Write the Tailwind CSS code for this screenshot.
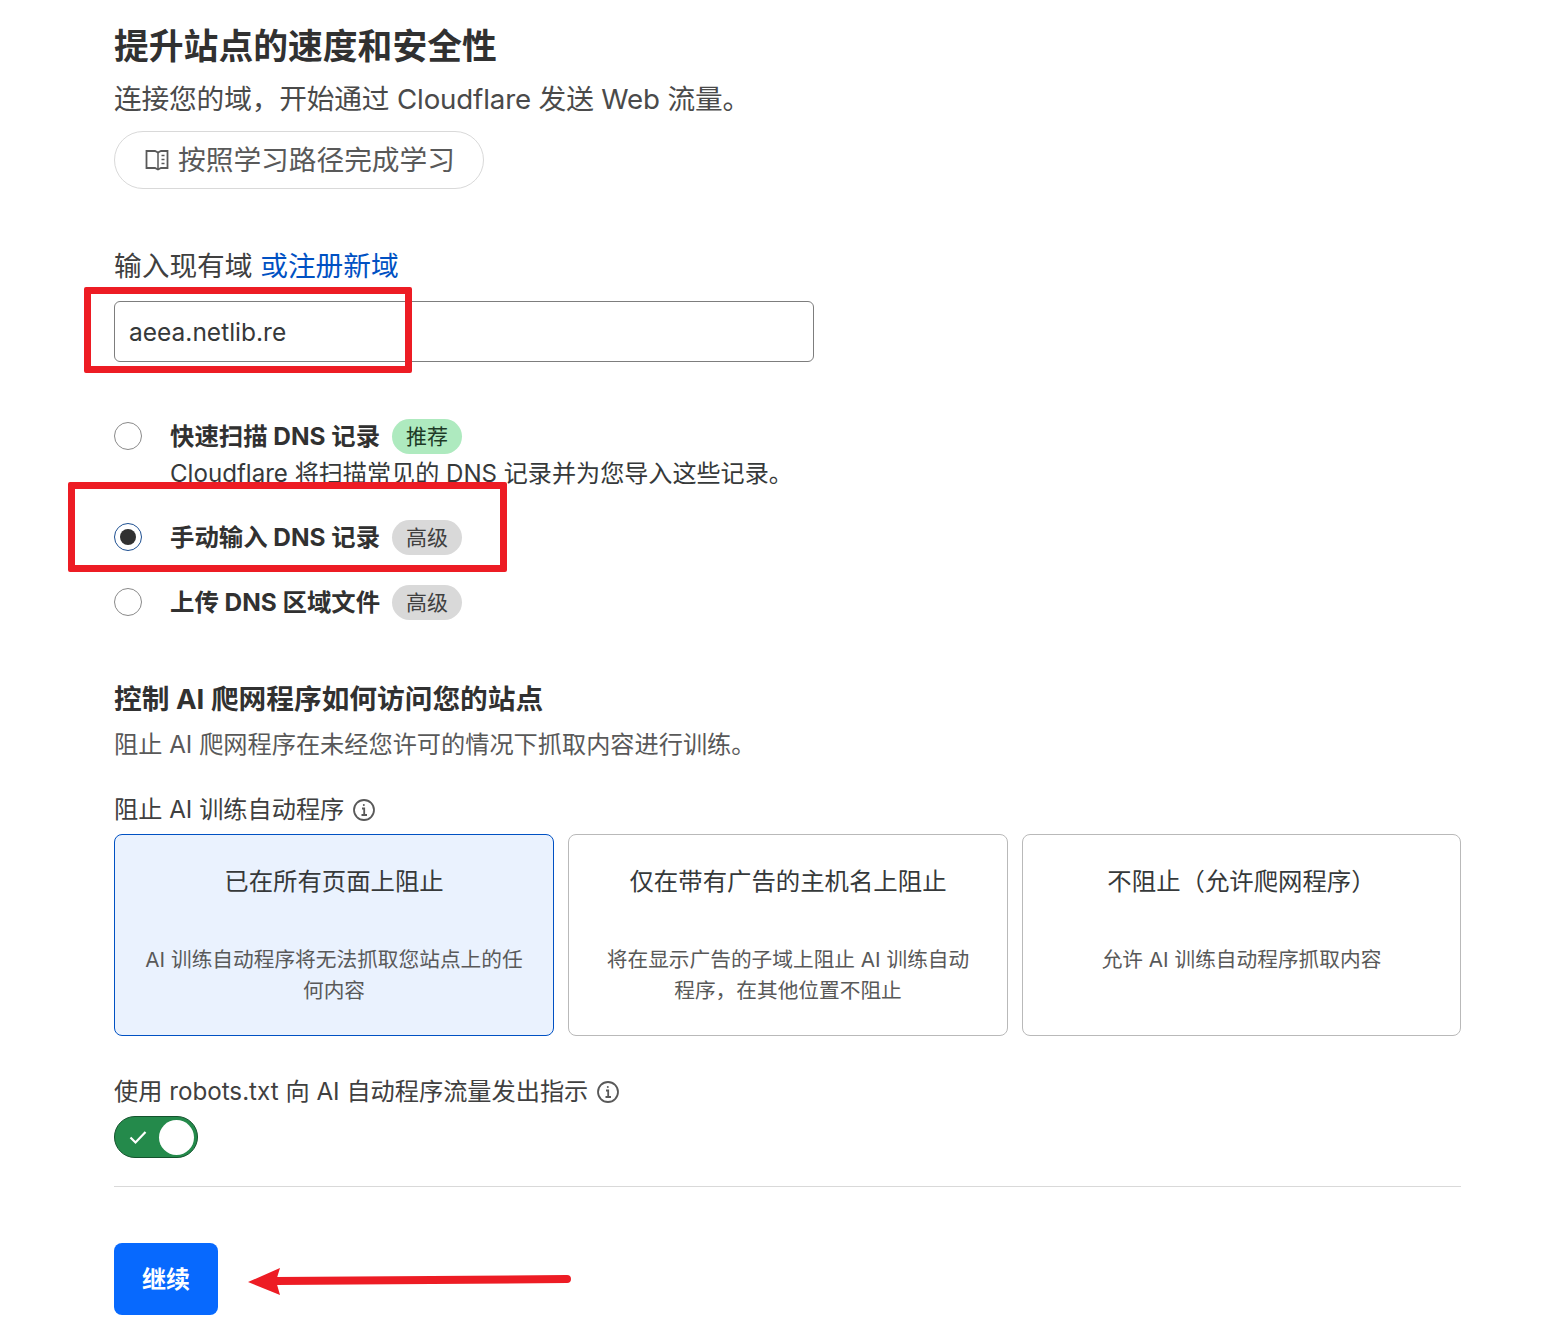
<!DOCTYPE html>
<html lang="zh-CN">
<head>
    <meta charset="UTF-8">
    <title>提升站点的速度和安全性</title>
    <script src="https://cdn.jsdelivr.net/npm/@tailwindcss/browser@4"></script>
</head>
<body class="bg-white">
    <div class="relative h-[1331px] overflow-hidden pl-[114px] pr-[82px] text-[#36393a] font-['Inter','Noto_Sans_CJK_SC',sans-serif]">

        <!-- intro -->
        <h1 class="pt-[24px] text-[34.800px] leading-[44px] font-bold text-[#313131]">提升站点的速度和安全性</h1>
        <p class="mt-[12px] text-[27.700px] leading-[38px] tracking-[-0.150px] text-[#4a4a4a]">连接您的域，开始通过 Cloudflare 发送 Web 流量。</p>
        <a href="#" class="mt-[13px] flex h-[58px] w-[370px] items-center gap-[9px] rounded-full border border-[#d9d9d9] pl-[30px] text-[27.700px] text-[#595959]">
            <svg class="h-[24px] w-[24px]" viewBox="0 0 24 24" fill="none" stroke="#595959" stroke-width="1.800">
                <path d="M1.500 3H10l3 1.500L16 3h6.500v17H16l-3 1.500-3-1.500H1.500z"/>
                <path d="M13 4.500v17M16.500 7.500h3M16.500 11.500h3M16.500 15.500h3" stroke-width="1.500"/>
            </svg>
            <span class="pt-[2px]">按照学习路径完成学习</span>
        </a>

        <!-- domain -->
        <label class="mt-[57px] block text-[27.700px] leading-[40px] text-[#404040]">输入现有域 <a href="#" class="text-[#0051c3]">或注册新域</a></label>
        <div class="mt-[15px] flex h-[61px] w-[700px] items-center rounded-[6px] border border-[#7d7d7d] pl-[14px] pt-[1px] text-[24.500px] text-[#36393a]">aeea.netlib.re</div>

        <!-- scan options -->
        <div class="mt-[57px] flex h-[35px] items-center">
            <span class="mt-[-2px] h-[28px] w-[28px] rounded-full border border-[#8a8a8a]"></span>
            <span class="ml-[28px] text-[24.400px] font-bold text-[#313131]">快速扫描 DNS 记录</span>
            <span class="ml-[12px] flex h-[35px] w-[70px] items-center justify-center rounded-full bg-[#aeeabf] text-[21px] text-[#1d3a26]">推荐</span>
        </div>
        <p class="ml-[56px] mt-[2px] h-[64px] text-[24.100px] leading-[36px] text-[#36393a]">Cloudflare 将扫描常见的 DNS 记录并为您导入这些记录。</p>
        <div class="flex h-[35px] items-center">
            <span class="mt-[-2px] flex h-[28px] w-[28px] items-center justify-center rounded-full border border-[#1d4f91]"><span class="h-[16px] w-[16px] rounded-full bg-[#313131]"></span></span>
            <span class="ml-[28px] text-[24.400px] font-bold text-[#313131]">手动输入 DNS 记录</span>
            <span class="ml-[12px] flex h-[35px] w-[70px] items-center justify-center rounded-full bg-[#d9d9d9] text-[21px] text-[#404040]">高级</span>
        </div>
        <div class="mt-[30px] flex h-[35px] items-center">
            <span class="mt-[-2px] h-[28px] w-[28px] rounded-full border border-[#8a8a8a]"></span>
            <span class="ml-[28px] text-[24.400px] font-bold text-[#313131]">上传 DNS 区域文件</span>
            <span class="ml-[12px] flex h-[35px] w-[70px] items-center justify-center rounded-full bg-[#d9d9d9] text-[21px] text-[#404040]">高级</span>
        </div>

        <!-- AI crawlers -->
        <h2 class="mt-[59px] text-[27.700px] leading-[40px] font-bold text-[#313131]">控制 AI 爬网程序如何访问您的站点</h2>
        <p class="mt-[8px] text-[24.200px] leading-[36px] text-[#595959]">阻止 AI 爬网程序在未经您许可的情况下抓取内容进行训练。</p>
        <div class="mt-[29px] flex h-[36px] items-center gap-[8px] text-[24.200px] text-[#404040]">
            阻止 AI 训练自动程序
            <svg class="h-[24px] w-[24px]" viewBox="0 0 24 24" fill="none" stroke="#595959" stroke-width="1.800">
                <circle cx="12" cy="12" r="10"/>
                <path d="M10 10.500h2.200V17M9.500 17h5.500"/>
                <circle cx="11.800" cy="7" r="1" fill="#595959" stroke="none"/>
            </svg>
        </div>
        <div class="mt-[6px] grid h-[202px] grid-cols-[440px_440px_439px] gap-[14px]">
            <div class="rounded-[8px] border border-[#0051c3] bg-[#eaf2fe] px-[28px] pt-[28px] text-center">
                <div class="text-[24.400px] leading-[36px] text-[#36393a]">已在所有页面上阻止</div>
                <div class="mt-[45px] text-[20.700px] leading-[31px] text-[#595959]">AI 训练自动程序将无法抓取您站点上的任何内容</div>
            </div>
            <div class="rounded-[8px] border border-[#b9b9b9] px-[28px] pt-[28px] text-center">
                <div class="text-[24.400px] leading-[36px] text-[#36393a]">仅在带有广告的主机名上阻止</div>
                <div class="mt-[45px] text-[20.700px] leading-[31px] text-[#595959]">将在显示广告的子域上阻止 AI 训练自动程序，在其他位置不阻止</div>
            </div>
            <div class="rounded-[8px] border border-[#b9b9b9] px-[28px] pt-[28px] text-center">
                <div class="text-[24.400px] leading-[36px] text-[#36393a]">不阻止（允许爬网程序）</div>
                <div class="mt-[45px] text-[20.700px] leading-[31px] text-[#595959]">允许 AI 训练自动程序抓取内容</div>
            </div>
        </div>

        <!-- robots -->
        <div class="mt-[38px] flex h-[36px] items-center gap-[8px] text-[24.200px] text-[#404040]">
            使用 robots.txt 向 AI 自动程序流量发出指示
            <svg class="h-[24px] w-[24px]" viewBox="0 0 24 24" fill="none" stroke="#595959" stroke-width="1.800">
                <circle cx="12" cy="12" r="10"/>
                <path d="M10 10.500h2.200V17M9.500 17h5.500"/>
                <circle cx="11.800" cy="7" r="1" fill="#595959" stroke="none"/>
            </svg>
        </div>
        <div class="mt-[6px] flex h-[42px] w-[84px] items-center justify-between rounded-full border border-[#14532d] bg-[#248a4b] pl-[14px] pr-[3px]">
            <svg class="h-[18px] w-[18px]" viewBox="0 0 18 18" fill="none" stroke="white" stroke-width="2.200"><path d="M1.500 9.500l5 5L16.500 4"/></svg>
            <span class="h-[35px] w-[35px] rounded-full bg-white"></span>
        </div>
        <hr class="mt-[28px] border-[#d9d9d9]">
        <button class="mt-[56px] flex h-[72px] w-[104px] items-center justify-center rounded-[8px] bg-[#0769fe] pt-[2px] text-[24px] font-bold text-white">继续</button>

        <!-- red markup drawn over the page -->
        <div class="absolute left-[84px] top-[287px] h-[86px] w-[328px] rounded-[2px] border-[7px] border-[#ed1c24]"></div>
        <div class="absolute left-[68px] top-[482px] h-[90px] w-[439px] rounded-[2px] border-[7px] border-[#ed1c24]"></div>
        <svg class="absolute left-[240px] top-[1260px]" width="340" height="40" viewBox="240 1260 340 40">
            <path d="M275 1281L567 1279" stroke="#ed1c24" stroke-width="8" stroke-linecap="round"/>
            <path d="M248 1282L280 1268L276 1281L280 1295z" fill="#ed1c24"/>
        </svg>
    </div>
</body>
</html>
